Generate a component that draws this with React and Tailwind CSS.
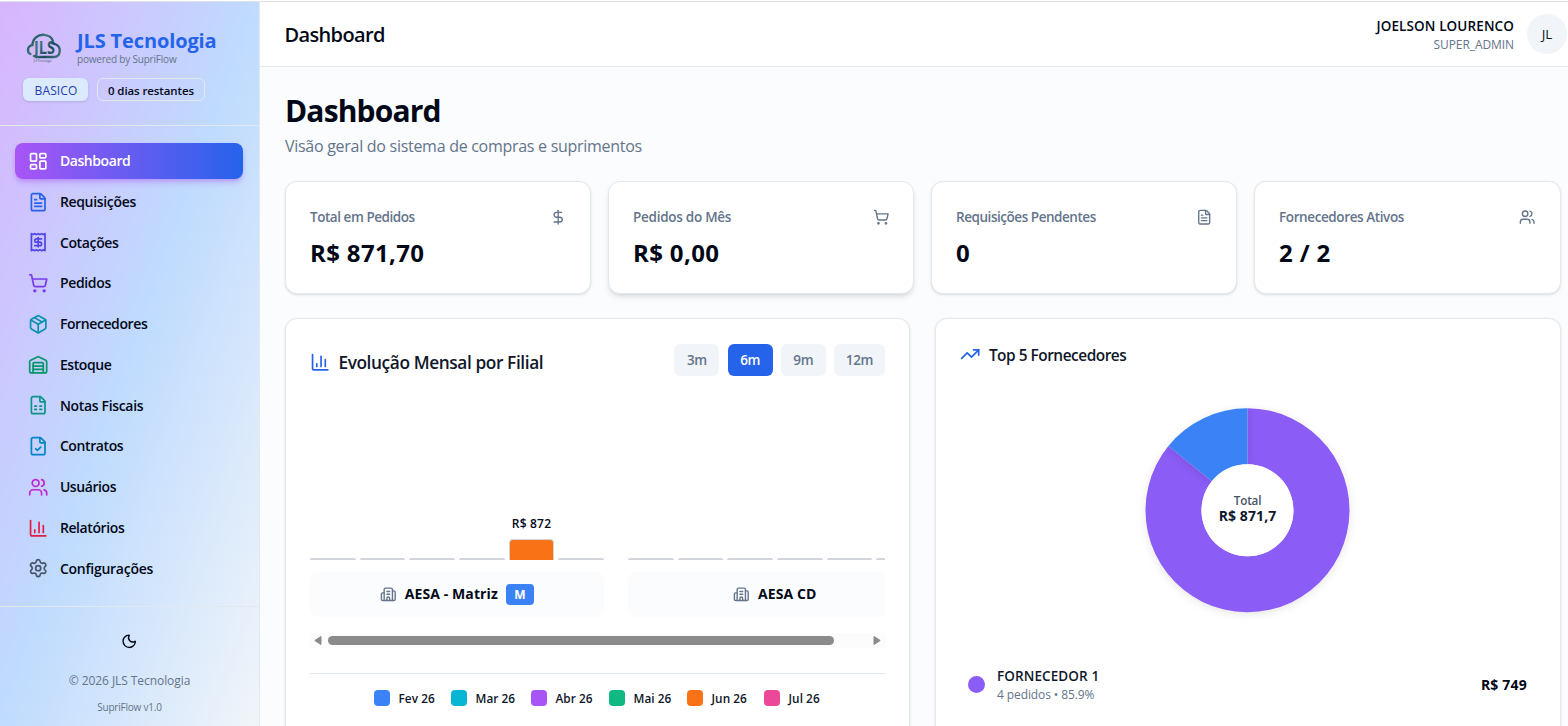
import React from "react";
import {
  Building2,
  ChartColumn,
  DollarSign,
  FileCheck,
  FileSpreadsheet,
  FileText,
  LayoutDashboard,
  Moon,
  Package,
  Receipt,
  Settings,
  ShoppingCart,
  TrendingUp,
  Users,
  Warehouse,
} from "lucide-react";

const navItems = [
  { label: "Dashboard", icon: LayoutDashboard, color: "text-white", tracking: "tracking-[-0.42px]", active: true },
  { label: "Requisições", icon: FileText, color: "text-[#2563eb]", tracking: "tracking-[-0.33px]" },
  { label: "Cotações", icon: Receipt, color: "text-[#4f46e5]", tracking: "tracking-[-0.35px]" },
  { label: "Pedidos", icon: ShoppingCart, color: "text-[#7c3aed]", tracking: "tracking-[-0.34px]" },
  { label: "Fornecedores", icon: Package, color: "text-[#0891b2]", tracking: "tracking-[-0.4px]" },
  { label: "Estoque", icon: Warehouse, color: "text-[#059669]", tracking: "tracking-[-0.42px]" },
  { label: "Notas Fiscais", icon: FileSpreadsheet, color: "text-[#0d9488]", tracking: "tracking-[-0.33px]" },
  { label: "Contratos", icon: FileCheck, color: "text-[#0284c7]", tracking: "tracking-[-0.4px]" },
  { label: "Usuários", icon: Users, color: "text-[#c026d3]", tracking: "tracking-[-0.42px]" },
  { label: "Relatórios", icon: ChartColumn, color: "text-[#e11d48]", tracking: "tracking-[-0.4px]" },
  { label: "Configurações", icon: Settings, color: "text-[#475569]", tracking: "tracking-[-0.25px]" },
];

const stats = [
  { label: "Total em Pedidos", value: "R$ 871,70", icon: DollarSign, tracking: "tracking-[-0.45px]", shadow: "shadow-sm" },
  { label: "Pedidos do Mês", value: "R$ 0,00", icon: ShoppingCart, tracking: "tracking-[-0.27px]", shadow: "shadow-md" },
  { label: "Requisições Pendentes", value: "0", icon: FileText, tracking: "tracking-[-0.46px]", shadow: "shadow-sm" },
  { label: "Fornecedores Ativos", value: "2 / 2", icon: Users, tracking: "tracking-[-0.4px]", shadow: "shadow-sm" },
];

const periods = ["3m", "6m", "9m", "12m"];

const branches = [
  { name: "AESA - Matriz", main: true, values: [0, 0, 0, 0, 872, 0] },
  { name: "AESA CD", main: false, values: [0, 0, 0, 0, 0, 0] },
];

const months = [
  { label: "Fev 26", color: "bg-[#3b82f6]", width: "w-[77px]" },
  { label: "Mar 26", color: "bg-[#06b6d4]", width: "w-[80px]" },
  { label: "Abr 26", color: "bg-[#a855f7]", width: "w-[78px]" },
  { label: "Mai 26", color: "bg-[#10b981]", width: "w-[78px]" },
  { label: "Jun 26", color: "bg-[#f97316]", width: "w-[77px]" },
  { label: "Jul 26", color: "bg-[#ec4899]", width: "w-[57px]" },
];

const Logo = () => (
  <svg width="36" height="34" viewBox="0 0 36 34" fill="none">
    <defs>
      <linearGradient id="logo" x1="0" y1="0" x2="36" y2="28" gradientUnits="userSpaceOnUse">
        <stop offset="0.1" stopColor="#134e4a" />
        <stop offset="0.4" stopColor="#3f7683" />
        <stop offset="0.65" stopColor="#1f4a5a" />
        <stop offset="1" stopColor="#4f7f8a" />
      </linearGradient>
    </defs>
    <g stroke="url(#logo)" strokeWidth="2.3" strokeLinecap="round">
      <path d="M4.5 22C0.8 20.5 1 14 6.5 13.2C6.5 6.5 12 2.4 18 2.8C22.5 3.2 25.8 5.5 26.8 8.5" />
      <path d="M9.5 25H28C35 25 35.5 15 30 12.5L26 11.2" />
    </g>
    <text
      x="8"
      y="21.5"
      fontSize="17"
      fontWeight="700"
      textLength="21"
      lengthAdjust="spacingAndGlyphs"
      fill="url(#logo)"
      fontFamily="Open Sans, sans-serif"
    >
      JLS
    </text>
    <text x="7.5" y="29.6" fontSize="2.6" fontWeight="600" textLength="18" fill="#64748b" fontFamily="Open Sans, sans-serif">
      JLS Tecnologia
    </text>
  </svg>
);

const Sidebar = () => (
  <aside className="flex w-[260px] shrink-0 flex-col border-r border-[#e2e8f0] bg-[linear-gradient(to_bottom_right,#d8b4fe,#bfdbfe,#f1f5f9)]">
    <div className="h-[124px] border-b border-[#e2e8f0] pt-[26px] pl-[23px]">
      <div className="flex gap-[16px]">
        <div className="w-[38px] pt-[4px] pl-[3px]">
          <Logo />
        </div>
        <div>
          <div className="text-xl leading-[25px] font-bold tracking-[-0.13px] text-[#2563eb]">JLS Tecnologia</div>
          <div className="text-[10px] leading-3 tracking-[-0.2px] text-[#64748b]">powered by SupriFlow</div>
        </div>
      </div>
      <div className="mt-[12px] flex gap-[9px] text-xs">
        <span className="flex h-[23px] w-[65px] items-center justify-center rounded-md bg-[#dbeafe] pt-[2px] pl-px tracking-[0.1px] text-[#1e40af] shadow-sm">
          BASICO
        </span>
        <span className="flex h-[23px] w-[108px] items-center justify-center rounded-md border border-[#e2e8f0] pt-[2px] text-[11.5px] font-semibold tracking-[-0.1px]">
          0 dias restantes
        </span>
      </div>
    </div>
    <nav className="flex h-[480px] flex-col gap-[4.75px] pt-[17px] pr-4 pl-[15px]">
      {navItems.map((item) => (
        <a
          key={item.label}
          className={`flex h-9 shrink-0 items-center gap-[11.5px] rounded-lg pl-[13px] text-sm font-semibold ${
            item.active ? "bg-[linear-gradient(to_right,#a855f7,#2563eb)] text-white shadow-md shadow-[#a855f7]/40" : ""
          }`}
        >
          <item.icon size={20.4} className={item.color} />
          <span className={item.tracking}>{item.label}</span>
        </a>
      ))}
    </nav>
    <div className="flex flex-1 flex-col items-center border-t border-[#e2e8f0] pt-[26px] text-[#64748b]">
      <Moon size={16.5} className="text-[#020817]" />
      <div className="mt-[23px] text-xs leading-4 tracking-[-0.07px]">© 2026 JLS Tecnologia</div>
      <div className="mt-[12px] text-[10px] leading-3 tracking-[-0.21px]">SupriFlow v1.0</div>
    </div>
  </aside>
);

const Header = () => (
  <header className="flex h-[65px] shrink-0 items-center justify-between border-b border-[#e2e8f0] bg-white pr-px pl-[24.5px]">
    <h2 className="pt-[2px] text-xl leading-7 font-semibold tracking-[-0.65px]">Dashboard</h2>
    <div className="flex items-center gap-[13px]">
      <div className="text-right">
        <div className="text-[13.5px] leading-5 font-semibold tracking-[0.12px]">JOELSON LOURENCO</div>
        <div className="text-xs leading-[17px] tracking-[-0.08px] text-[#64748b]">SUPER_ADMIN</div>
      </div>
      <div className="flex size-10 items-center justify-center rounded-full bg-[#f1f5f9] text-[13.5px] font-medium text-[#0f172a]">JL</div>
    </div>
  </header>
);

const StatCard = ({ stat }) => (
  <div className={`h-[113px] rounded-xl border border-[#e2e8f0] bg-white px-6 pt-[25px] ${stat.shadow}`}>
    <div className="flex items-center justify-between text-[#64748b]">
      <span className={`text-[13.5px] leading-5 font-semibold ${stat.tracking}`}>{stat.label}</span>
      <stat.icon size={16.4} />
    </div>
    <div className="mt-[10px] text-2xl leading-8 font-bold tracking-[0.35px]">{stat.value}</div>
  </div>
);

const Bar = ({ value }) => {
  if (!value) {
    return <div className="h-[2px] flex-1 rounded-t bg-[#d1d5db]" />;
  }
  return (
    <div className="flex flex-1 flex-col items-center">
      <span className="mb-[7px] text-xs font-semibold tracking-[0.2px] whitespace-nowrap">R$ {value}</span>
      <div className="h-[21px] w-full rounded-t border border-b-0 border-[#d1d5db] bg-[#f97316]" />
    </div>
  );
};

const Branch = ({ branch }) => (
  <div className="w-[294px] shrink-0">
    <div className="flex h-[180px] items-end gap-1">
      {branch.values.map((value, i) => (
        <Bar key={i} value={value} />
      ))}
    </div>
    <div className="mt-[12px] flex h-[45px] items-center justify-center gap-[8px] rounded-lg bg-[#fbfcfe]">
      <Building2 size={16.6} className="text-[#64748b]" />
      <span className="pb-px text-sm font-bold tracking-[0.1px]">{branch.name}</span>
      {branch.main && (
        <span className="flex h-[21px] w-7 items-center justify-center rounded bg-[#3b82f6] text-xs font-bold text-white">M</span>
      )}
    </div>
  </div>
);

const Scrollbar = () => (
  <div className="mt-[16px] flex h-[15px] items-center bg-[#fcfcfc] px-[4px]">
    <svg width="8" height="9" viewBox="0 0 8 9" fill="#8b8b8b" stroke="#8b8b8b" strokeLinejoin="round">
      <path d="M7 0.5V8.5L0.8 4.5Z" />
    </svg>
    <div className="ml-[6px] h-[9px] w-[506px] rounded-full bg-[#8b8b8b]" />
    <svg className="ml-auto" width="8" height="9" viewBox="0 0 8 9" fill="#8b8b8b" stroke="#8b8b8b" strokeLinejoin="round">
      <path d="M1 0.5V8.5L7.2 4.5Z" />
    </svg>
  </div>
);

const EvolutionCard = () => (
  <section className="w-[625px] rounded-xl border border-[#e2e8f0] bg-white px-6 pt-[25px] shadow-sm">
    <div className="flex h-8 items-center justify-between">
      <div className="mt-[5px] flex items-center gap-[8px]">
        <ChartColumn size={20.4} className="text-[#2563eb]" />
        <h3 className="pt-px text-[17.3px] leading-7 font-semibold tracking-[-0.4px] text-[#0f172a]">Evolução Mensal por Filial</h3>
      </div>
      <div className="flex gap-[8.2px]">
        {periods.map((period) => (
          <button
            key={period}
            className={`h-8 rounded-md text-[13.5px] font-semibold tracking-[-0.3px] ${period === "12m" ? "w-[51px]" : "w-[45px]"} ${
              period === "6m" ? "bg-[#2563eb] text-white" : "bg-[#f1f5f9] text-[#64748b]"
            }`}
          >
            {period}
          </button>
        ))}
      </div>
    </div>
    <div className="mt-[4px] flex gap-[24px] overflow-hidden">
      {branches.map((branch) => (
        <Branch key={branch.name} branch={branch} />
      ))}
    </div>
    <Scrollbar />
    <div className="mt-[25px] flex justify-center border-t border-[#e2e8f0] pt-[16px]">
      {months.map((month) => (
        <div key={month.label} className={`flex items-center gap-[8.5px] ${month.width}`}>
          <span className={`size-4 rounded ${month.color}`} />
          <span className="text-[11.8px] leading-4 font-semibold tracking-[0.05px] whitespace-nowrap text-[#0f172a]">{month.label}</span>
        </div>
      ))}
    </div>
  </section>
);

const Donut = () => (
  <svg className="mx-auto" width="220" height="220" viewBox="-109.5 -110.3 220 220">
    <g className="[filter:drop-shadow(0_2px_4px_rgba(0,0,0,0.1))]">
      <path d="M0 -102A102 102 0 1 1 -79.1 -64.4L-35.7 -29.1A46 46 0 1 0 0 -46Z" fill="#8b5cf6" />
    </g>
    <g className="[filter:drop-shadow(0_2px_4px_rgba(0,0,0,0.1))]">
      <path d="M-79.1 -64.4A102 102 0 0 1 0 -102V-46A46 46 0 0 0 -35.7 -29.1Z" fill="#3b82f6" />
    </g>
    <circle r="46" fill="#fff" />
    <text y="-5" textAnchor="middle" fontSize="11.7" fontWeight="600" letterSpacing="-0.2" fill="#475569">
      Total
    </text>
    <text y="11" textAnchor="middle" fontSize="14" fontWeight="700" letterSpacing="0.1" fill="#0f172a">
      R$ 871,7
    </text>
  </svg>
);

const SuppliersCard = () => (
  <section className="w-[626px] rounded-xl border border-[#e2e8f0] bg-white px-6 pt-[22px] shadow-sm">
    <div className="flex h-[26px] items-center gap-[8.5px]">
      <TrendingUp size={20.4} className="text-[#2563eb]" />
      <h3 className="pt-[3px] text-[15.4px] leading-6 font-semibold tracking-[-0.47px] text-[#0f172a]">Top 5 Fornecedores</h3>
    </div>
    <div className="mt-[33px]">
      <Donut />
    </div>
    <div className="mt-[46px] flex items-center gap-[12px] pr-[9px] pl-[8px]">
      <span className="size-[17px] rounded-full bg-[#8b5cf6]" />
      <div className="flex-1">
        <div className="text-[13.5px] leading-5 font-semibold tracking-[0.1px] text-[#0f172a]">FORNECEDOR 1</div>
        <div className="pt-px text-xs leading-4 tracking-[-0.1px] text-[#64748b]">4 pedidos • 85.9%</div>
      </div>
      <span className="text-sm font-bold tracking-[0.2px]">R$ 749</span>
    </div>
  </section>
);

const App = () => (
  <div className="flex h-[726px] w-[1568px] flex-col overflow-hidden bg-white pt-px font-['Open_Sans','Noto_Sans',sans-serif] text-[#020817]">
    <div className="h-px shrink-0 bg-[#dee1e4]" />
    <div className="flex min-h-0 flex-1">
      <Sidebar />
      <div className="flex min-w-0 flex-1 flex-col">
        <Header />
        <main className="flex-1 overflow-hidden bg-[#fbfcfe] pt-[26px] pl-[25px]">
          <h1 className="text-3xl leading-9 font-bold tracking-[-0.85px]">Dashboard</h1>
          <p className="mt-[5px] text-base tracking-[-0.28px] text-[#64748b]">Visão geral do sistema de compras e suprimentos</p>
          <div className="mt-[23px] grid w-[1275.5px] grid-cols-4 gap-[16.6px]">
            {stats.map((stat) => (
              <StatCard key={stat.label} stat={stat} />
            ))}
          </div>
          <div className="mt-[24px] flex h-[560px] gap-[25px]">
            <EvolutionCard />
            <SuppliersCard />
          </div>
        </main>
      </div>
    </div>
  </div>
);

export default App;
